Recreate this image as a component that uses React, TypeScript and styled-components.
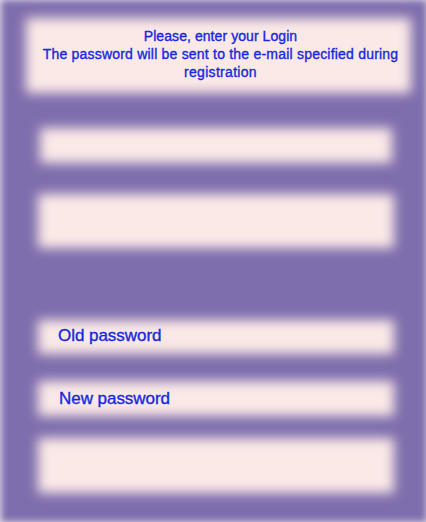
import React from 'react';
import styled, { createGlobalStyle } from 'styled-components';

const GlobalStyle = createGlobalStyle`
  body {
    margin: 0;
    overflow: hidden;
  }
`;

const Panel = styled.main`
  box-sizing: border-box;
  display: flex;
  flex-direction: column;
  width: 426px;
  height: 522px;
  padding-top: 18px;
  background: #7f6ead;
  box-shadow: inset 1px 0 7px 0 #e9e2f0;
  color: #1428e0;
  font-family: 'Liberation Sans', Arial, sans-serif;
  -webkit-text-stroke: 0.35px #1428e0;
`;

const SoftBox = styled.div<{ $left: number; $width: number; $height: number; $gap?: number }>`
  position: relative;
  isolation: isolate;
  box-sizing: border-box;
  flex: none;
  width: ${(p) => p.$width}px;
  height: ${(p) => p.$height}px;
  margin-left: ${(p) => p.$left}px;
  margin-top: ${(p) => p.$gap ?? 0}px;

  &::before {
    content: '';
    position: absolute;
    inset: 0;
    z-index: -1;
    background: #fbe9e7;
    filter: blur(6px);
  }
`;

const Message = styled.p`
  margin: 0;
  padding: 9px 0 0 4px;
  text-align: center;
  font-size: 14px;
  line-height: 18px;
  white-space: nowrap;
`;

const Line = styled.span<{ $spacing: number }>`
  display: block;
  letter-spacing: ${(p) => p.$spacing}px;
`;

const Label = styled.span<{ $indent: number; $drop: number }>`
  display: block;
  padding: ${(p) => p.$drop}px 0 0 ${(p) => p.$indent}px;
  font-size: 17px;
  line-height: 20px;
  letter-spacing: -0.04px;
  white-space: nowrap;
`;

export default function App() {
  return (
    <>
      <GlobalStyle />
      <Panel>
        <SoftBox $left={26} $width={385} $height={75}>
          <Message>
            <Line $spacing={0.07}>Please, enter your Login</Line>
            <Line $spacing={0.21}>The password will be sent to the e-mail specified during</Line>
            <Line $spacing={0.3}>registration</Line>
          </Message>
        </SoftBox>
        <SoftBox $left={40} $width={352} $height={35} $gap={35} />
        <SoftBox $left={38} $width={356} $height={54} $gap={31} />
        <SoftBox $left={38} $width={356} $height={34} $gap={72}>
          <Label $indent={20} $drop={6}>Old password</Label>
        </SoftBox>
        <SoftBox $left={38} $width={356} $height={35} $gap={27}>
          <Label $indent={21} $drop={8}>New password</Label>
        </SoftBox>
        <SoftBox $left={38} $width={356} $height={55} $gap={22} />
      </Panel>
    </>
  );
}
